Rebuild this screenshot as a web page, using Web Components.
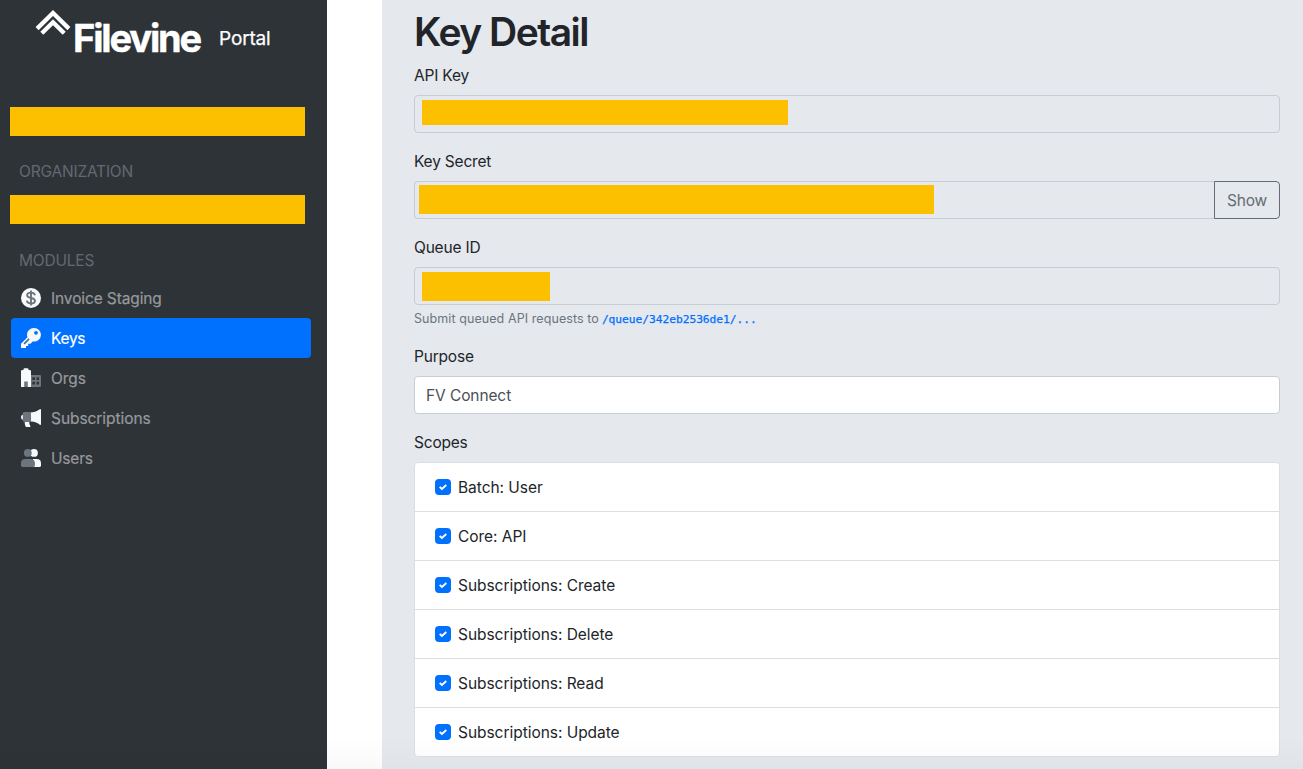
<!DOCTYPE html>
<html lang="en">
<head>
<meta charset="utf-8">
<title>Filevine Portal</title>
<style>
html,body{margin:0;height:100%;overflow:hidden}
body{background:#fff;font-family:Inter,"Liberation Sans",sans-serif;font-size:15.5px;line-height:26px;color:#212529}
</style>
</head>
<body>
<portal-app></portal-app>
<script>
function define(name, html, setup) {
  const template = document.createElement('template');
  template.innerHTML = html;
  customElements.define(name, class extends HTMLElement {
    connectedCallback() {
      if (this.shadowRoot) return;
      this.attachShadow({mode: 'open'}).append(template.content.cloneNode(true));
      if (setup) setup(this, this.shadowRoot);
    }
  });
}

const icons = {
  dollar: `<circle cx="10" cy="10" r="10" fill="#f8f9fa"/><path d="M14 7.2C13.6 5.4 12.2 4.6 10 4.6 7.6 4.6 6.1 5.7 6.1 7.3 6.1 9.1 7.6 9.5 10 10c2.5.5 4 1.1 4 2.8 0 1.7-1.6 2.7-4 2.7-2.5 0-3.9-1.1-4.2-2.8M10 2.4v15.2" fill="none" stroke="#6c757d" stroke-width="1.9"/>`,
  key: `<path d="M13.1 0A6.8 6.8 0 0 1 20 6.7a6.8 6.8 0 0 1-8.3 6.7l-2.2 2.3H7.2v2.2H5V20H0v-4.2l6.5-6.5A6.8 6.8 0 0 1 13.1 0Z" fill="#f8f9fa"/><circle cx="15" cy="4.8" r="1.9" fill="#0070ff"/><path d="m3.1 15.9 5-5" stroke="#496c9e" stroke-width="1.7"/>`,
  building: `<path d="M10 7h8.7Q20 7 20 8.3v9.4Q20 19 18.7 19H10Z" fill="#6c757d"/><path d="M11.3 9.3h2.6v2.8h-2.6ZM15.6 9.3H18v2.8h-2.4ZM11.3 13.8h2.6v2.8h-2.6ZM15.6 13.8H18v2.8h-2.4Z" fill="#2e3338"/><path d="M0 3.4Q0 2 1.3 2h1.2V1.2Q2.5.2 3.6.2h2.8q1.1 0 1.1 1V2h1.2Q10 2 10 3.4V19H0Z" fill="#f8f9fa"/><path d="M3.2 19v-5.5H6.8V19Z" fill="#6c757d"/>`,
  horn: `<g transform="translate(0 1)"><path d="M3.2 5.6C1 5.6 0 6.6 0 8.2s1 2.8 3.2 2.8ZM3.7 13h4.5c0 2 .7 3.2 1.2 4.1.3.6 0 .9-.7.9H5.2c-.7 0-1.5-2.9-1.5-5ZM10 3.4c4.3-.3 6.2-1.3 8.4-2.9Q20-.7 20 1v13.9q0 1.7-1.6.5C16.2 13.8 14.3 12.9 10 12.6Z" fill="#f8f9fa"/><path d="M3 3.1H10v9.9H3.2Q1.8 13 1.8 11V4.5Q1.8 3.1 3 3.1Z" fill="#6c757d"/></g>`,
  users: `<g transform="translate(0 1)"><circle cx="13" cy="3.9" r="3.9" fill="#f8f9fa"/><path d="M12 10h3.4Q20 10 20 14.2v2.4q0 1.4-1.4 1.4H12Z" fill="#f8f9fa"/><circle cx="6.8" cy="3.9" r="3.9" fill="#6c757d"/><path d="M0 14.2q0-4.2 4.6-4.2H9q4.9 0 4.9 4.2v2.4q0 1.4-1.4 1.4H1.4Q0 18 0 16.6Z" fill="#6c757d"/></g>`
};

define('portal-brand', `<style>
:host{display:flex;height:60px;padding:9px 0 0 35px;box-sizing:border-box;color:#fff}
svg{width:36px;height:27px;flex:none}
b{font:700 38px/44px Inter,sans-serif;letter-spacing:-2.15px;margin:7px 0 0 2px;width:146px;white-space:nowrap;-webkit-text-stroke:.4px #fff}
span{font-size:19px;line-height:28px;margin-top:16px;letter-spacing:-.15px;-webkit-text-stroke:.25px #fff}
</style>
<svg viewBox="0 0 36 27"><g fill="none" stroke="#fff" stroke-width="4.3"><path d="M2.1 19.6 18 4l15.9 15.6"/><path d="m6.8 24.2 11.2-11L29.2 24.2"/></g></svg>
<b>Filevine</b><span>Portal</span>`);

define('redacted-bar', `<style>:host{display:block;background:#fdc000}</style>`, el => {
  el.style.width = el.getAttribute('width') + 'px';
  el.style.height = el.getAttribute('height') + 'px';
});

define('nav-heading', `<style>
:host{display:block;height:24px;color:#636970;padding-left:9px;letter-spacing:-.2px}
</style><slot></slot>`);

define('nav-item', `<style>
:host{display:flex;align-items:center;box-sizing:border-box;width:300px;height:40px;margin-left:1px;padding-left:10px;gap:10px;border-radius:4px;color:#97999c}
:host([active]){background:#0070ff;color:#fff}
svg{width:20px;height:20px;flex:none}
span{padding-top:2px;-webkit-text-stroke:.2px currentColor}
</style><svg viewBox="0 0 20 20"></svg><span><slot></slot></span>`, (el, root) => {
  root.querySelector('svg').innerHTML = icons[el.getAttribute('icon')];
});

define('portal-sidebar', `<style>
:host{display:flex;flex-direction:column;width:327px;box-sizing:border-box;background:#2e3338}
nav{padding:47px 0 0 10px;display:flex;flex-direction:column}
nav-heading{margin:23px 0 12px}
.modules{margin:24px 0 6px}
</style>
<portal-brand></portal-brand>
<nav>
<redacted-bar width="295" height="29"></redacted-bar>
<nav-heading>ORGANIZATION</nav-heading>
<redacted-bar width="295" height="29"></redacted-bar>
<nav-heading class="modules">MODULES</nav-heading>
<nav-item icon="dollar" style="letter-spacing:-.12px">Invoice Staging</nav-item>
<nav-item icon="key" active style="letter-spacing:-.3px">Keys</nav-item>
<nav-item icon="building" style="letter-spacing:-.05px">Orgs</nav-item>
<nav-item icon="horn" style="letter-spacing:-.06px">Subscriptions</nav-item>
<nav-item icon="users">Users</nav-item>
</nav>`);

define('form-field', `<style>
:host{display:block;margin-bottom:16px}
label{display:block;height:24px;margin-bottom:8px}
.row{display:flex}
.box{flex:1;height:38px;box-sizing:border-box;border:1px solid #c8cdd4;border-radius:4px;display:flex;color:#495057}
:host([editable]) .box{background:#fff;padding:2px 0 0 11px;align-items:center;letter-spacing:-.1px}
:host([joined]) .box{border-radius:4px 0 0 4px;border-right:0}
</style><label></label><div class="row"><div class="box"><slot></slot></div><slot name="action"></slot></div><slot name="hint"></slot>`, (el, root) => {
  root.querySelector('label').textContent = el.getAttribute('label');
});

define('outline-button', `<style>
:host{display:flex;align-items:center;justify-content:center;width:66px;height:38px;box-sizing:border-box;padding-top:2px;border:1px solid #646c75;border-radius:0 4px 4px 0;color:#646c75}
</style><slot></slot>`);

define('field-hint', `<style>
:host{display:block;margin-top:4px;height:19px;line-height:19px;font-size:12.5px;color:#6c757d;white-space:nowrap;letter-spacing:.08px}
code{font:11.3px/19px "DejaVu Sans Mono",monospace;color:#0070ff;margin-left:3px;letter-spacing:-.07px;-webkit-text-stroke:.25px #0070ff}
</style><slot></slot><code></code>`, (el, root) => {
  root.querySelector('code').textContent = el.getAttribute('path');
});

define('scope-item', `<style>
:host{display:flex;align-items:center;height:48px;padding-left:20px;gap:7px;border-bottom:1px solid #dcdfe1;letter-spacing:-.04px}
:host(:last-of-type){border-bottom:0}
svg{width:16px;height:16px}
span{padding-top:2px}
</style><svg viewBox="0 0 16 16"><rect width="16" height="16" rx="4" fill="#0070ff"/><path d="m4.7 7.9 2.2 2.1 4.4-4" fill="none" stroke="#fff" stroke-width="1.9"/></svg><span><slot></slot></span>`);

define('scope-list', `<style>
:host{display:block;background:#fff;border:1px solid #dcdfe1;border-radius:4px}
</style><slot></slot>`);

define('key-detail', `<style>
:host{display:block;flex:1;margin-left:55px;box-sizing:border-box;padding:8px 23px 0 32px;background:#e5e8ed}
h1{margin:0 0 7px;font-size:39px;line-height:48px;font-weight:600;letter-spacing:-1.5px}
</style>
<h1>Key Detail</h1>
<form-field label="API Key"><redacted-bar width="366" height="25" style="margin:4px 0 0 7px"></redacted-bar></form-field>
<form-field label="Key Secret" joined><redacted-bar width="515" height="29" style="margin:3px 0 0 4px"></redacted-bar><outline-button slot="action">Show</outline-button></form-field>
<form-field label="Queue ID"><redacted-bar width="128" height="29" style="margin:4px 0 0 7px"></redacted-bar><field-hint slot="hint" path="/queue/342eb2536de1/...">Submit queued API requests to</field-hint></form-field>
<form-field label="Purpose" editable>FV Connect</form-field>
<div style="height:24px;margin-bottom:8px">Scopes</div>
<scope-list>
<scope-item>Batch: User</scope-item>
<scope-item>Core: API</scope-item>
<scope-item>Subscriptions: Create</scope-item>
<scope-item>Subscriptions: Delete</scope-item>
<scope-item>Subscriptions: Read</scope-item>
<scope-item>Subscriptions: Update</scope-item>
</scope-list>`);

define('portal-app', `<style>
:host{display:flex;position:relative;height:100vh;overflow:hidden;letter-spacing:-.2px}
:host::after{content:"";position:absolute;left:0;right:0;bottom:0;height:32px;background:linear-gradient(transparent,rgba(0,0,0,.025));pointer-events:none}
</style><portal-sidebar></portal-sidebar><key-detail></key-detail>`);
</script>
</body>
</html>
